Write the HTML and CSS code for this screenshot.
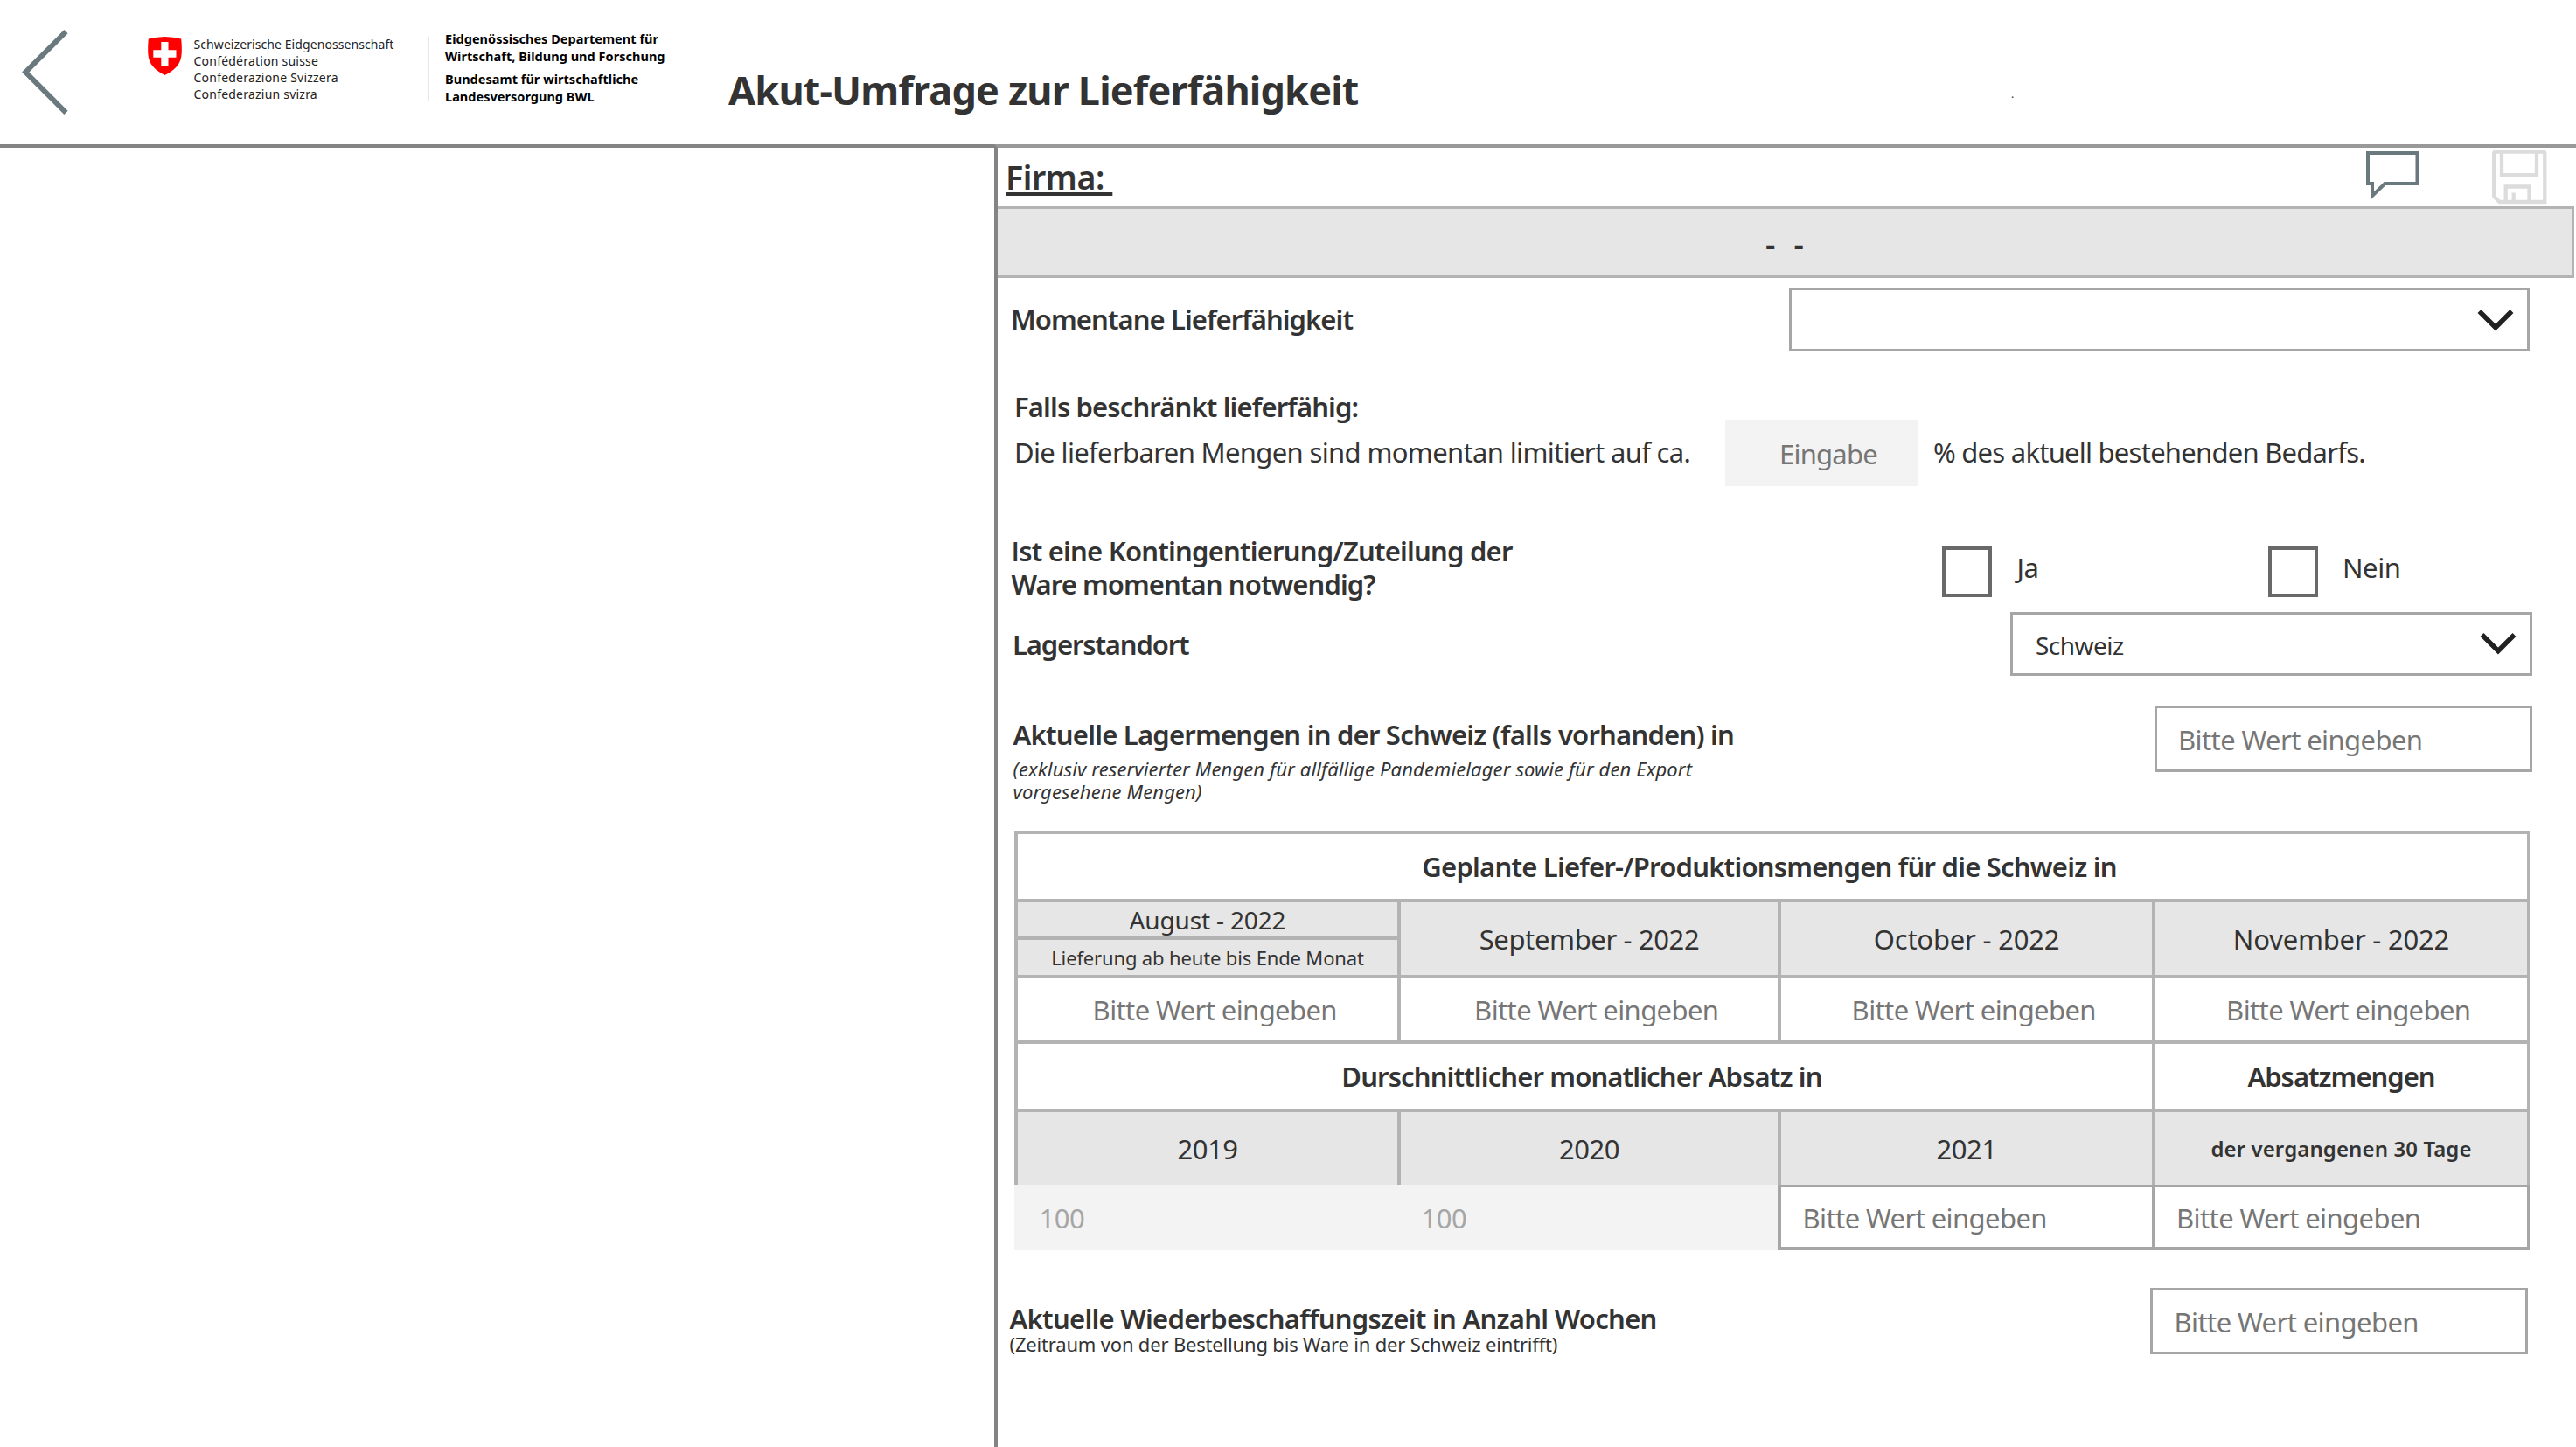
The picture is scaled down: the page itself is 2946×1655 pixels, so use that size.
FILE: index.html
```html
<!DOCTYPE html>
<html lang="de">
<head>
<meta charset="utf-8">
<title>Akut-Umfrage zur Lieferfähigkeit</title>
<link rel="stylesheet" href="styles.css">
</head>
<body>
<header class="header">
  <svg class="back" viewBox="0 0 54 100" width="54" height="100"><path d="M50.5 3.2 4.3 49.5 50.5 95.8" fill="none" stroke="#69797e" stroke-width="6"/></svg>
  <svg class="shield" viewBox="0 0 39 44" width="39" height="44"><path d="M.8 2.600Q19.500-2.400 38.200 2.600C39.500 17 39 25 35 31.500Q30 39 19.500 44Q9 39 4 31.500C0 25-.5 17 .8 2.600Z" fill="#f00"/><path d="M15.300 6h8.200v9.300h9v8.400h-9V33h-8.200v-9.300h-9v-8.400h9z" fill="#fff"/></svg>
  <div class="confederation">
    <div>Schweizerische Eidgenossenschaft</div>
    <div class="wide">Confédération suisse</div>
    <div class="wide">Confederazione Svizzera</div>
    <div class="wide">Confederaziun svizra</div>
  </div>
  <div class="divider"></div>
  <div class="department">
    <p>Eidgenössisches Departement für<br>Wirtschaft, Bildung und Forschung</p>
    <p>Bundesamt für wirtschaftliche<br>Landesversorgung BWL</p>
  </div>
  <h1 class="title">Akut-Umfrage zur Lieferfähigkeit</h1>
  <span class="dot">.</span>
</header>

<div class="body">
  <aside class="sidebar"></aside>
  <main class="panel">
    <div class="toolbar">
      <h2 class="company">Firma: </h2>
      <svg class="comment" viewBox="0 0 61 56" width="61" height="56"><path d="M2 2H58.500V37H21.500L7 51V37H2Z" fill="none" stroke="#69797e" stroke-width="4"/></svg>
      <svg class="save" viewBox="0 0 64 63" width="64" height="63"><g fill="none" stroke="#dcdcdc" stroke-width="4.300"><path d="M6 2.500H58.500Q61.300 2.500 61.300 5V60H9.500L3.200 53.500V5Q3.200 2.500 6 2.500Z"/><path d="M12 2.500V29.200H52V2.500M16.700 60V42.500H43.500V60M25.700 49.500V60"/></g></svg>
    </div>
    <div class="band">-  -</div>

    <section class="row row-delivery">
      <label class="label t-momentane">Momentane Lieferfähigkeit</label>
      <div class="select select-wide">
        <span></span>
        <svg class="chevron" viewBox="0 0 42 26" width="42" height="26"><path d="M2.500 3 21 21.500 39.500 3" fill="none" stroke="#212121" stroke-width="5.500"/></svg>
      </div>
    </section>

    <section class="limited">
      <h3 class="label limited-title">Falls beschränkt lieferfähig:</h3>
      <div class="limited-line">
        <span class="text limited-before">Die lieferbaren Mengen sind momentan limitiert auf ca.</span>
        <div class="percent">Eingabe</div>
        <span class="text limited-after">% des aktuell bestehenden Bedarfs.</span>
      </div>
    </section>

    <section class="row row-quota">
      <label class="label quota-label"><span class="initial">I</span>st eine Kontingentierung/Zuteilung der<br><span class="quota-second">Ware momentan notwendig?</span></label>
      <div class="option option-yes"><i class="checkbox"></i><span class="text">Ja</span></div>
      <div class="option option-no"><i class="checkbox"></i><span class="text">Nein</span></div>
    </section>

    <section class="row row-place">
      <label class="label t-lagerstandort">Lagerstandort</label>
      <div class="select select-place">
        <span>Schweiz</span>
        <svg class="chevron" viewBox="0 0 42 26" width="42" height="26"><path d="M2.500 3 21 21.500 39.500 3" fill="none" stroke="#212121" stroke-width="5.500"/></svg>
      </div>
    </section>

    <section class="row row-stock">
      <div>
        <div class="label t-lagermengen">Aktuelle Lagermengen in der Schweiz (falls vorhanden) in</div>
        <div class="hint">(exklusiv reservierter Mengen für allfällige Pandemielager sowie für den Export<br>vorgesehene Mengen)</div>
      </div>
      <div class="input">Bitte Wert eingeben</div>
    </section>

    <section class="table">
      <div class="cell span-4 label t-geplante">Geplante Liefer-/Produktionsmengen für die Schweiz in</div>
      <div class="split">
        <div class="cell grey month-small">August - 2022</div>
        <div class="cell grey month-note">Lieferung ab heute bis Ende Monat</div>
      </div>
      <div class="cell grey t-september">September - 2022</div>
      <div class="cell grey t-month">October - 2022</div>
      <div class="cell grey t-month">November - 2022</div>
      <div class="cell entry">Bitte Wert eingeben</div>
      <div class="cell entry">Bitte Wert eingeben</div>
      <div class="cell entry">Bitte Wert eingeben</div>
      <div class="cell entry">Bitte Wert eingeben</div>
      <div class="cell span-3 label t-absatz">Durschnittlicher monatlicher Absatz in</div>
      <div class="cell label t-absatzmengen">Absatzmengen</div>
      <div class="cell grey year">2019</div>
      <div class="cell grey year">2020</div>
      <div class="cell grey year">2021</div>
      <div class="cell grey last-days">der vergangenen 30 Tage</div>
    </section>
    <section class="sales">
      <div class="fixed">100</div>
      <div class="fixed">100</div>
      <div class="sale-entry">Bitte Wert eingeben</div>
      <div class="sale-entry sale-last">Bitte Wert eingeben</div>
    </section>

    <section class="row row-lead">
      <div>
        <div class="label t-wieder">Aktuelle Wiederbeschaffungszeit in Anzahl Wochen</div>
        <div class="lead-hint">(Zeitraum von der Bestellung bis Ware in der Schweiz eintrifft)</div>
      </div>
      <div class="input">Bitte Wert eingeben</div>
    </section>
  </main>
</div>
</body>
</html>
```
FILE: styles.css
```css
* { box-sizing: border-box; }

body {
  margin: 0;
  width: 2946px;
  height: 1655px;
  overflow: hidden;
  background: #fff;
  color: #333;
  font: 400 31px/38px "Noto Sans", "Open Sans", sans-serif;
  white-space: nowrap;
}

h1, h2, h3, p { margin: 0; font-size: inherit; font-weight: inherit; }
svg { display: block; flex: none; }

/* Header */
.header { display: flex; align-items: flex-start; height: 165px; }
.back { margin: 33px 0 0 25px; }
.shield { margin: 42px 0 0 89.500px; }
.confederation { width: 267px; margin: 41px 0 0 14px; font-size: 14px; line-height: 19.100px; letter-spacing: 0.080px; color: #222; }
.wide { letter-spacing: 0.220px; }
.divider { width: 2px; height: 73px; margin-top: 42px; background: #e8e8e8; }
.department { width: 324px; margin: 33.500px 0 0 18.500px; font-size: 14.500px; line-height: 20px; font-weight: 700; letter-spacing: 0.030px; color: #000; }
.department p + p { margin-top: 6px; }
.title { width: 1467px; margin-top: 72.500px; font-size: 45px; line-height: 60px; font-weight: 700; letter-spacing: -0.830px; }
.dot { margin-top: 101px; font-size: 12px; line-height: 14px; }

/* Split view */
.body { display: flex; height: 1490px; }
.sidebar { width: 1137px; border-top: 4px solid #848484; }
.panel { flex: 1; border-left: 4px solid #848484; border-top: 4px solid #999; }

.toolbar { display: flex; align-items: flex-start; height: 67px; padding-left: 9px; }
.company { margin-top: 9.500px; font-size: 37.500px; line-height: 48px; font-weight: 600; letter-spacing: -0.400px; white-space: pre; text-decoration: underline; text-decoration-thickness: 4px; text-underline-offset: 3px; text-decoration-skip-ink: none; }
.comment { margin: 4px 82px 0 auto; }
.save { margin: 2px 33px 0 0; }

.band { display: flex; align-items: center; justify-content: center; height: 82px; margin-right: 2px; padding-top: 3px; border: 3px solid #b3b3b3; border-left: 0; background: #e6e6e6; font-size: 34px; font-weight: 700; white-space: pre; word-spacing: 2px; }

/* Form rows */
.label { font-weight: 600; letter-spacing: -0.850px; }
.row { display: flex; align-items: flex-start; padding-right: 53px; }

.select { display: flex; align-items: center; justify-content: space-between; height: 73px; margin-left: auto; padding: 0 15.500px 0 26px; border: 3px solid #a6a6a6; font-size: 28px; letter-spacing: -0.540px; }
.select span { padding-top: 4px; }
.select-wide { width: 847px; padding-right: 15px; }
.select-place { width: 597px; }

.input { display: flex; align-items: center; width: 432.500px; height: 76px; margin-left: auto; padding: 2px 0 0 24.500px; border: 3px solid #a6a6a6; }
.input, .entry, .sale-entry, .percent { color: #767676; letter-spacing: -0.600px; }

.row-delivery { height: 122px; padding-left: 15px; }
.row-delivery .label { margin-top: 28px; letter-spacing: -0.940px; }
.row-delivery .select { margin-top: 11px; }

.limited { height: 160px; padding: 6px 0 0 19px; }
.limited-title { height: 34px; letter-spacing: -0.870px; }
.limited-line { display: flex; align-items: flex-start; }
.limited-before { width: 812.500px; margin-top: 18px; letter-spacing: -0.650px; }
.percent { display: flex; align-items: center; width: 221.500px; height: 76px; padding: 2px 0 0 62.500px; background: #f3f3f3; letter-spacing: -0.780px; }
.limited-after { margin: 18px 0 0 17px; letter-spacing: -0.754px; }

.row-quota { height: 90px; padding-left: 15.500px; }
.quota-label { margin-top: 11px; letter-spacing: -0.790px; }
.initial { font-family: "Open Sans", sans-serif; }
.quota-second { letter-spacing: -0.920px; }
.option { display: flex; align-items: flex-start; letter-spacing: -0.450px; }
.option-yes { width: 373px; margin-left: auto; }
.option-no { width: 299px; }
.checkbox { width: 57px; height: 58px; margin: 25px 28px 0 0; border: 4px solid #696969; }
.option-yes .checkbox { margin-right: 28.500px; }
.option .text { margin-top: 30px; }

.row-place { height: 100px; padding: 0 50px 0 17px; }
.row-place .label { margin-top: 28px; letter-spacing: -1.150px; }
.row-place .select { margin-top: 9.500px; }

.row-stock { height: 160px; padding: 0 50px 0 17.500px; }
.t-lagermengen { margin-top: 31px; letter-spacing: -0.775px; }
.hint { margin-top: 6.500px; font-size: 22px; line-height: 26.700px; font-style: italic; letter-spacing: 0.125px; }
.row-stock .input { margin-top: 17px; }

/* Quantities table */
.table { display: grid; grid-template-columns: 434px 431px 424px 425px; grid-template-rows: 74px 83px 71px 74px 83px; gap: 4px; width: 1733px; margin-left: 19px; padding: 4px 3px 0 4px; background: #b3b3b3; }
.cell { display: flex; align-items: center; justify-content: center; background: #fff; }
.grey { background: #e6e6e6; }
.span-4 { grid-column: span 4; }
.span-3 { grid-column: span 3; }
.split { display: grid; grid-template-rows: 39px 40px; gap: 4px; }
.month-small { font-size: 28px; letter-spacing: -0.160px; }
.month-note { font-size: 22px; letter-spacing: -0.150px; }
.t-september { letter-spacing: -0.370px; }
.t-month { letter-spacing: -0.200px; }
.entry { padding-left: 16.500px; }
.t-geplante { padding-right: 7px; letter-spacing: -0.778px; }
.t-absatz { padding-right: 7px; letter-spacing: -0.877px; }
.t-absatzmengen { letter-spacing: -1px; }
.year { letter-spacing: -0.500px; }
.last-days { font-size: 24px; font-weight: 600; letter-spacing: 0.100px; }

.sales { display: grid; grid-template-columns: 438px 435px 428px 432px; height: 75px; width: 1733px; margin-left: 19px; }
.fixed { display: flex; align-items: center; padding-left: 28.500px; background: #f3f3f3; color: #a6a6a6; letter-spacing: -0.500px; }
.fixed + .fixed { padding-left: 27.500px; }
.sale-entry { display: flex; align-items: center; padding: 1px 0 0 24.500px; border: solid #a6a6a6; border-width: 3px 0 4px 4px; }
.sale-last { padding-left: 24px; border-right-width: 3px; }

.row-lead { padding: 0 55px 0 13.500px; }
.t-wieder { margin-top: 60px; line-height: 36px; letter-spacing: -0.730px; }
.lead-hint { font-size: 22px; line-height: 22px; letter-spacing: -0.180px; }
.row-lead .input { margin-top: 43px; padding-left: 25px; }
```
